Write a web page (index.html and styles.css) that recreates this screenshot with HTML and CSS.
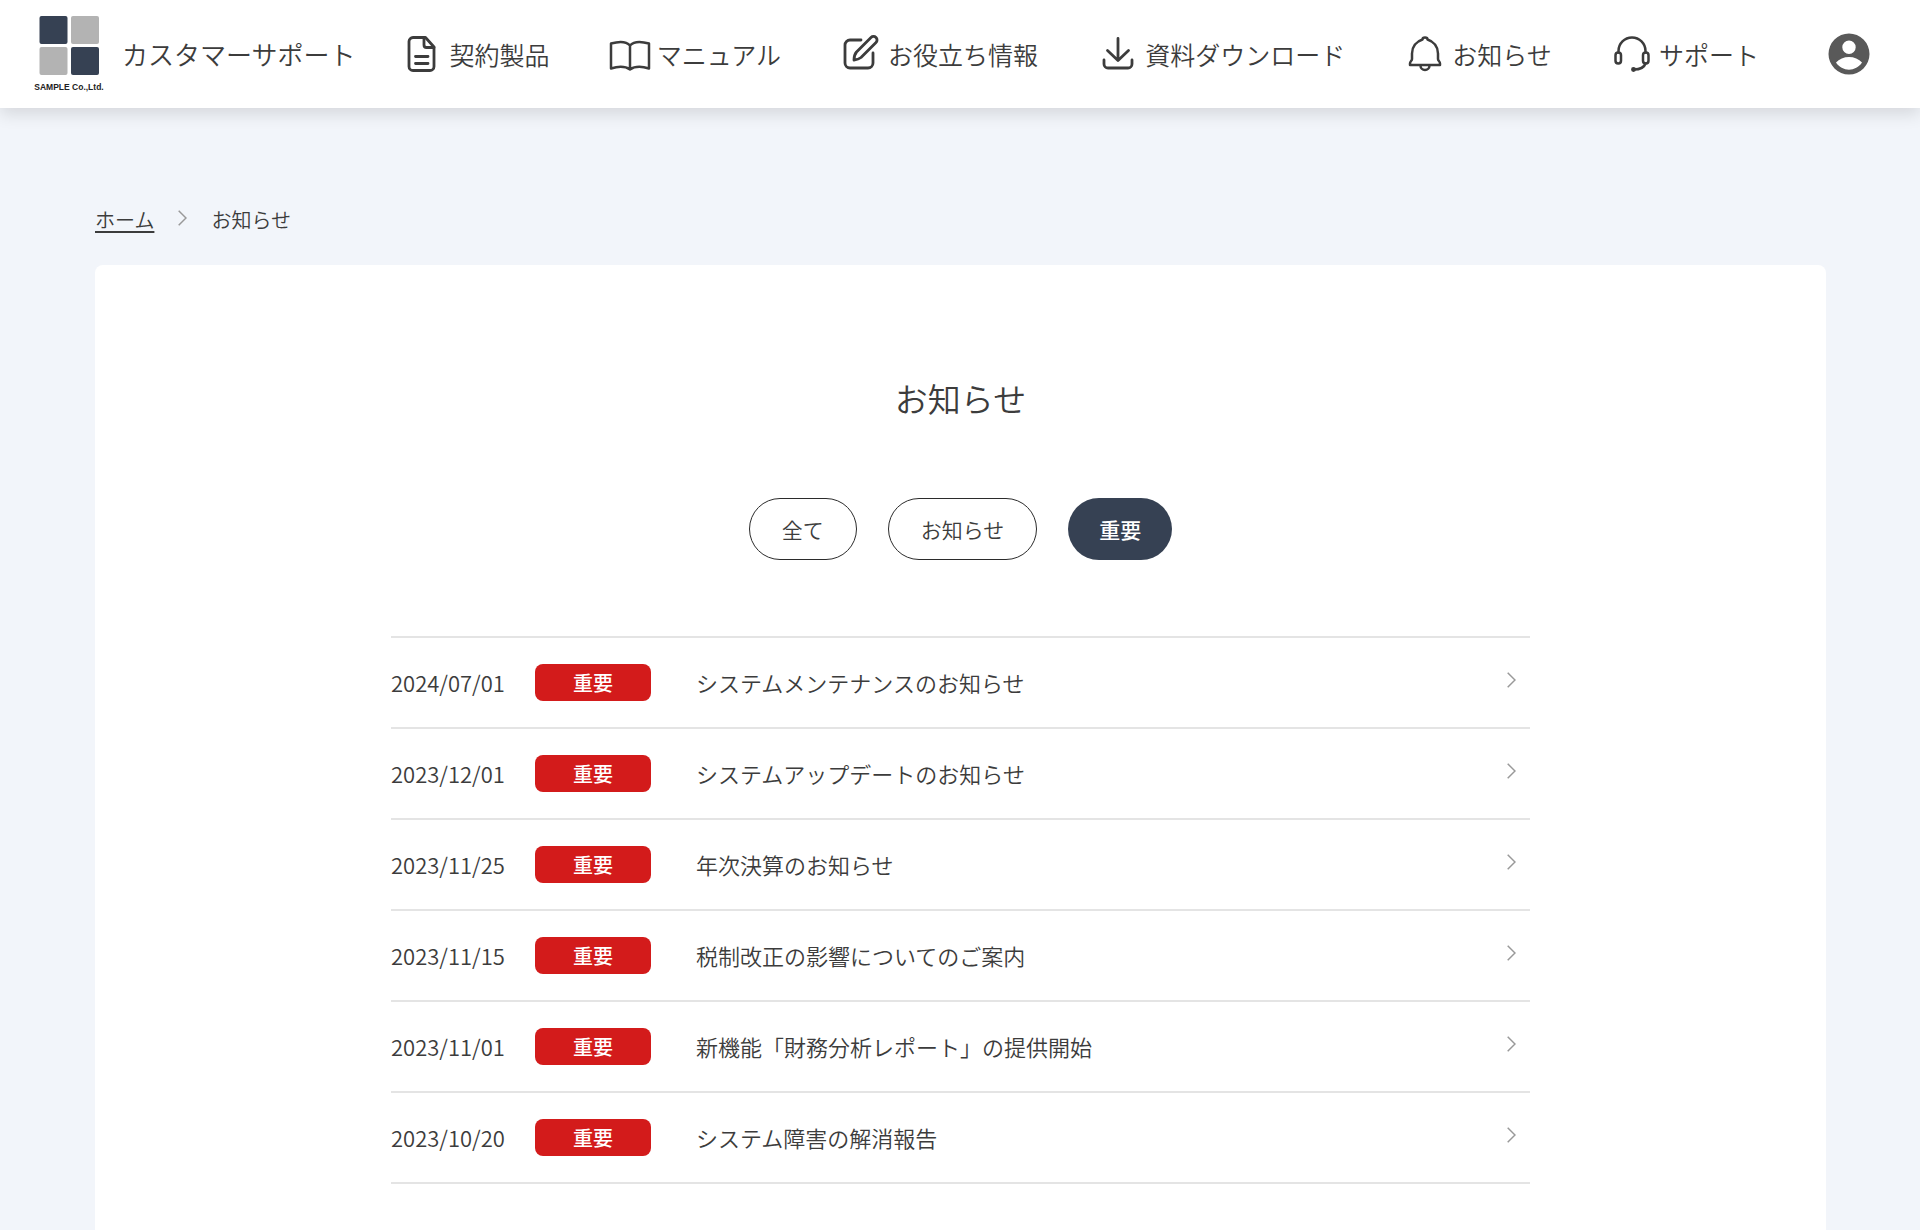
FILE: index.html
```html
<!DOCTYPE html>
<html lang="ja">
<head>
<meta charset="utf-8">
<meta name="viewport" content="width=device-width, initial-scale=1">
<title>お知らせ | カスタマーサポート</title>
<link rel="stylesheet" href="styles.css">
</head>
<body>
<header class="header">
  <a class="brand" href="#">
    <svg class="brand-logo" viewBox="0 0 140 156" role="img" aria-label="SAMPLE Co.,Ltd.">
      <rect class="logo-navy" x="11" y="2" width="56" height="56" rx="4"/>
      <rect class="logo-gray" x="74" y="2" width="56" height="56" rx="4"/>
      <rect class="logo-gray" x="11" y="64" width="56" height="56" rx="4"/>
      <rect class="logo-navy" x="74" y="64" width="56" height="56" rx="4"/>
      <text class="logo-text" x="70" y="150" text-anchor="middle">SAMPLE Co.,Ltd.</text>
    </svg>
    <span class="brand-name">カスタマーサポート</span>
  </a>
  <nav class="nav" aria-label="メインメニュー">
    <a class="nav-item" href="#">
      <svg class="nav-icon nav-icon-bold" viewBox="0 0 42 42">
        <path d="M12 4.500H24.500L33 14V33.500a4 4 0 0 1-4 4H12a4 4 0 0 1-4-4V8.500a4 4 0 0 1 4-4Z"/>
        <path d="M23 5V12a2.500 2.500 0 0 0 2.500 2.500H33M14.500 23.500H27M14.500 30.500H27"/>
      </svg>
      <span>契約製品</span>
    </a>
    <a class="nav-item" href="#">
      <svg class="nav-icon" viewBox="0 0 42 42">
        <path d="M21 12.500C17 8 9 8.500 2 10.500V35.500C8.500 33.500 16 33 21 36.500C26 33 33.500 33.500 40 35.500V10.500C33 8.500 25 8 21 12.500ZM21 12.500V36.500"/>
      </svg>
      <span>マニュアル</span>
    </a>
    <a class="nav-item" href="#">
      <svg class="nav-icon nav-icon-bold" viewBox="0 0 42 42">
        <path d="M21 7H10a5 5 0 0 0-5 5V30a5 5 0 0 0 5 5H28a5 5 0 0 0 5-5V20"/>
        <path d="M31 4.500a3.500 3.500 0 0 1 5 5L21 24.500Q18.500 26.500 14 27Q14 22 16.500 19Z"/>
      </svg>
      <span>お役立ち情報</span>
    </a>
    <a class="nav-item" href="#">
      <svg class="nav-icon nav-icon-bold" viewBox="0 0 42 42">
        <path d="M21 5.500V27.500M10.500 17.500L21 27.500L31.500 17.500M7 27V31a4 4 0 0 0 4 4H31a4 4 0 0 0 4-4V27"/>
      </svg>
      <span>資料ダウンロード</span>
    </a>
    <a class="nav-item" href="#">
      <svg class="nav-icon" viewBox="0 0 42 42">
        <path d="M21 4.500C19.500 4.500 18.500 5.500 18.500 6.500C12 8.500 8 14 8 20.500V26C8 28 6 28 6 30.500V32H36V30.500C36 28 34 28 34 26V20.500C34 14 30 8.500 23.500 6.500C23.500 5.500 22.500 4.500 21 4.500Z"/>
        <path d="M16.500 32.500a4.500 4.500 0 0 0 9 0"/>
      </svg>
      <span>お知らせ</span>
    </a>
    <a class="nav-item" href="#">
      <svg class="nav-icon" viewBox="0 0 42 42">
        <path d="M7.500 19.500V18a13.500 13.500 0 0 1 27 0V19.500M34.500 30.500C33 35 29 36.500 23 36.500"/>
        <rect x="4.500" y="19.500" width="5.500" height="11" rx="2.700"/>
        <rect x="32" y="19.500" width="5.500" height="11" rx="2.700"/>
        <circle class="icon-dot" cx="22.500" cy="36.500" r="1.200"/>
      </svg>
      <span>サポート</span>
    </a>
  </nav>
  <button class="account" type="button" aria-label="アカウント">
    <svg class="account-icon" viewBox="0 0 42 42">
      <path fill-rule="evenodd" d="M21 0.500a20.500 20.500 0 1 0 0 41a20.500 20.500 0 1 0 0-41ZM21 7.500a6.700 6.700 0 1 1 0 13.400a6.700 6.700 0 1 1 0-13.400ZM8 29.500C14 22 28 22 34 29.500C28 39 14 39 8 29.500Z"/>
    </svg>
  </button>
</header>

<main class="page">
  <nav class="breadcrumb" aria-label="パンくずリスト">
    <a class="breadcrumb-link" href="#">ホーム</a>
    <svg class="chevron" viewBox="0 0 9 16"><path d="M0.700 0.700L8 8L0.700 15.300"/></svg>
    <span>お知らせ</span>
  </nav>

  <section class="card">
    <h1 class="card-title">お知らせ</h1>
    <div class="filters">
      <button class="filter" type="button">全て</button>
      <button class="filter" type="button">お知らせ</button>
      <button class="filter filter-active" type="button" aria-pressed="true">重要</button>
    </div>
    <ul class="news">
      <li class="news-row"><a class="news-link" href="#">
        <time class="news-date">2024/07/01</time><span class="badge">重要</span><span class="news-title">システムメンテナンスのお知らせ</span>
        <svg class="chevron" viewBox="0 0 9 16"><path d="M0.700 0.700L8 8L0.700 15.300"/></svg>
      </a></li>
      <li class="news-row"><a class="news-link" href="#">
        <time class="news-date">2023/12/01</time><span class="badge">重要</span><span class="news-title">システムアップデートのお知らせ</span>
        <svg class="chevron" viewBox="0 0 9 16"><path d="M0.700 0.700L8 8L0.700 15.300"/></svg>
      </a></li>
      <li class="news-row"><a class="news-link" href="#">
        <time class="news-date">2023/11/25</time><span class="badge">重要</span><span class="news-title">年次決算のお知らせ</span>
        <svg class="chevron" viewBox="0 0 9 16"><path d="M0.700 0.700L8 8L0.700 15.300"/></svg>
      </a></li>
      <li class="news-row"><a class="news-link" href="#">
        <time class="news-date">2023/11/15</time><span class="badge">重要</span><span class="news-title">税制改正の影響についてのご案内</span>
        <svg class="chevron" viewBox="0 0 9 16"><path d="M0.700 0.700L8 8L0.700 15.300"/></svg>
      </a></li>
      <li class="news-row"><a class="news-link" href="#">
        <time class="news-date">2023/11/01</time><span class="badge">重要</span><span class="news-title">新機能「財務分析レポート」の提供開始</span>
        <svg class="chevron" viewBox="0 0 9 16"><path d="M0.700 0.700L8 8L0.700 15.300"/></svg>
      </a></li>
      <li class="news-row"><a class="news-link" href="#">
        <time class="news-date">2023/10/20</time><span class="badge">重要</span><span class="news-title">システム障害の解消報告</span>
        <svg class="chevron" viewBox="0 0 9 16"><path d="M0.700 0.700L8 8L0.700 15.300"/></svg>
      </a></li>
    </ul>
  </section>
</main>
</body>
</html>
```
FILE: styles.css
```css
* {
  box-sizing: border-box;
}

body {
  display: flex;
  flex-direction: column;
  min-height: 100vh;
  margin: 0;
  background: #f2f5fa;
  color: #3c3c3c;
  font-family: "Noto Sans CJK JP", sans-serif;
  font-size: 20px;
  font-weight: 350;
}

a {
  color: inherit;
  text-decoration: none;
}

button {
  font: inherit;
  color: inherit;
  cursor: pointer;
}

svg {
  display: block;
  flex: none;
}

/* Header */
.header {
  display: flex;
  align-items: center;
  min-height: 108px;
  padding: 0 50px 0 34px;
  background: #fff;
  box-shadow: 0 6px 16px rgba(0, 0, 0, 0.12);
}

.brand {
  display: flex;
  align-items: center;
  gap: 18px;
}

.brand-logo {
  width: 70px;
  height: 78px;
}

.logo-navy {
  fill: #364153;
}

.logo-gray {
  fill: #b3b3b3;
}

.logo-text {
  fill: #222;
  font-family: "Liberation Sans", sans-serif;
  font-size: 17px;
  font-weight: 700;
}

.brand-name {
  font-size: 26px;
  line-height: 40px;
  white-space: nowrap;
}

.nav {
  display: flex;
  flex: 1;
  justify-content: space-between;
  margin: 0 69px 0 46px;
  font-size: 25px;
  line-height: 40px;
  white-space: nowrap;
}

.nav-item {
  display: flex;
  align-items: center;
  gap: 6px;
}

.nav-icon {
  width: 42px;
  height: 42px;
  fill: none;
  stroke: #3c3c3c;
  stroke-width: 2.500;
  stroke-linecap: round;
  stroke-linejoin: round;
}

.nav-icon-bold {
  stroke-width: 2.800;
}

.icon-dot {
  fill: #3c3c3c;
}

.account {
  padding: 0;
  border: 0;
  background: none;
}

.account-icon {
  width: 42px;
  height: 42px;
  fill: #595959;
}

/* Page */
.page {
  display: flex;
  flex: 1;
  flex-direction: column;
  padding: 96px 94px 0 95px;
}

.breadcrumb {
  display: flex;
  align-items: center;
  gap: 24px;
  margin-bottom: 29px;
  line-height: 32px;
}

.breadcrumb-link {
  text-decoration: underline;
  text-underline-offset: 3px;
}

.chevron {
  width: 9px;
  height: 16px;
  margin-bottom: 4px;
  fill: none;
  stroke: #999;
  stroke-width: 1.500;
}

.card {
  flex: 1;
  padding: 113px 32px 44px;
  border-radius: 8px 8px 0 0;
  background: #fff;
}

.card-title {
  margin: 0 0 80px;
  font-size: 33px;
  font-weight: inherit;
  line-height: 40px;
  text-align: center;
}

.filters {
  display: flex;
  justify-content: center;
  gap: 31px;
  margin-bottom: 76px;
}

.filter {
  height: 62px;
  padding: 0 32px;
  border: 1px solid #2b2b2b;
  border-radius: 31px;
  background: #fff;
  font-size: 21px;
}

.filter-active {
  padding: 0 31px;
  border: 0;
  background: #364153;
  color: #fff;
  font-weight: 500;
}

/* News list */
.news {
  max-width: 1139px;
  margin: 0 auto;
  padding: 0;
  border-top: 2px solid #e4e4e4;
  list-style: none;
}

.news-row {
  border-bottom: 2px solid #e4e4e4;
}

.news-link {
  display: grid;
  grid-template-columns: 144px 116px 1fr auto;
  align-items: center;
  min-height: 89px;
  padding-right: 14px;
  font-size: 22px;
  line-height: 32px;
}

.news-link .chevron {
  margin-bottom: 6px;
}

.news-date,
.news-title {
  padding-bottom: 2px;
}

.badge {
  border-radius: 8px;
  background: #d31b1b;
  color: #fff;
  font-size: 20px;
  font-weight: 500;
  line-height: 37px;
  text-align: center;
}

.news-title {
  padding-left: 45px;
}
```
